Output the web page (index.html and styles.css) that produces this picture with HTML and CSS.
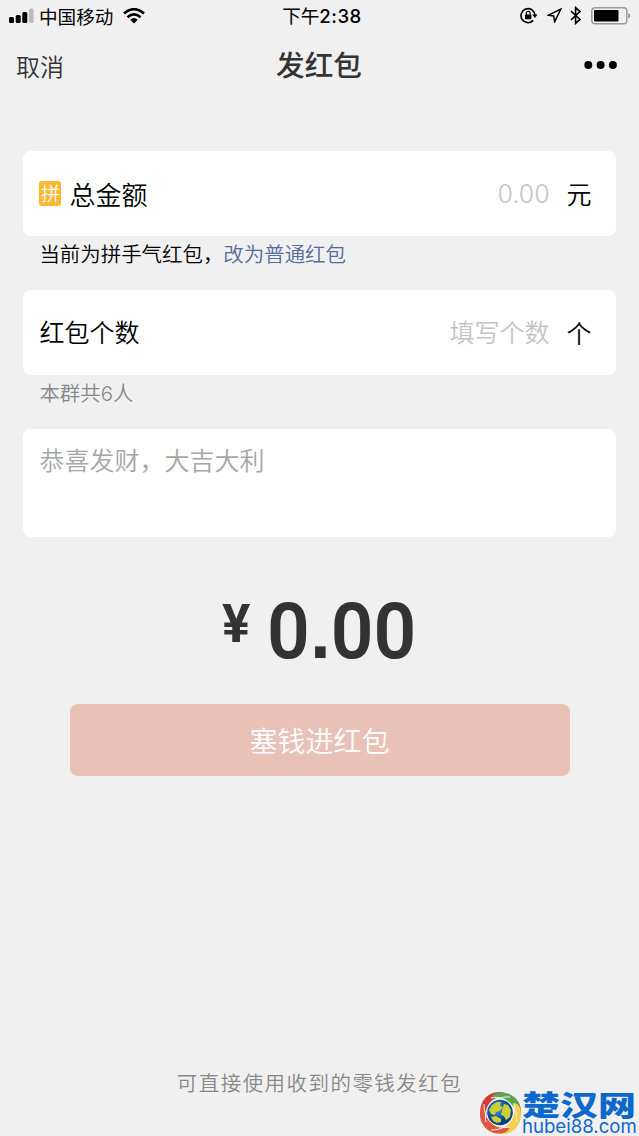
FILE: index.html
```html
<!DOCTYPE html>
<html lang="zh-CN">
<head>
<meta charset="utf-8">
<title>发红包</title>
<link rel="stylesheet" href="styles.css">
</head>
<body>
<div class="screen">
  <header class="status">
    <div class="carrier">
      <svg class="signal" width="25" height="16" viewBox="0 0 25 16"><rect x="0" y="9" width="5" height="6" rx="1.5"/><rect x="6.7" y="7" width="5" height="8" rx="1.5"/><rect x="13.3" y="4" width="5" height="11" rx="1.5"/><rect x="20" y="0.5" width="4.7" height="14.5" rx="1.5" fill="#bcbcbc"/></svg>
      <span>中国移动</span>
      <svg class="wifi" width="22" height="16" viewBox="0 0 22 16"><g fill="none" stroke="#000" stroke-width="2.7"><path d="M1 5.4Q11-3 21 5.4"/><path d="M4.5 9.2Q11 3.6 17.5 9.2"/></g><path d="M7.3 11.7Q11 8.5 14.7 11.7L11 15.5Z"/></svg>
    </div>
    <div class="time">下午<b>2:38</b></div>
    <div class="indicators">
      <svg width="18" height="17" viewBox="0 0 18 17"><path d="M13.2 13.4A7 7 0 1 1 15 8" fill="none" stroke="#000" stroke-width="1.6"/><path d="M12.2 7.5h5.4l-2.7 3.4z"/><rect x="5" y="7.4" width="6.4" height="4.8" rx=".6"/><path d="M6.3 8V6.2a1.9 1.9 0 0 1 3.8 0V8" fill="none" stroke="#000" stroke-width="1.2"/></svg>
      <svg class="arrow" width="15" height="15" viewBox="0 0 15 15"><path d="M13.8 1.1L1.1 7.2l5.6.8.9 5.9z" fill="none" stroke="#000" stroke-width="1.5"/></svg>
      <svg class="bluetooth" width="12" height="19" viewBox="0 0 12 19"><path d="M1 5.2l9 8.2-4.4 4V1.6l4.4 4-9 8.2" fill="none" stroke="#000" stroke-width="1.6"/></svg>
      <svg class="battery" width="40" height="18" viewBox="0 0 40 18"><rect x=".8" y=".8" width="35" height="16" rx="3.3" fill="none" stroke="#999" stroke-width="1.5"/><rect x="3" y="3" width="24.5" height="11.6" rx="1"/><path d="M37.2 6v5.6q2-.7 2-2.8t-2-2.8" fill="#999"/></svg>
    </div>
  </header>
  <nav class="nav">
    <span class="cancel">取消</span>
    <h1>发红包</h1>
    <svg class="more" width="34" height="8" viewBox="0 0 34 8"><circle cx="4.3" cy="4" r="4"/><circle cx="16.6" cy="4" r="4"/><circle cx="28.9" cy="4" r="4"/></svg>
  </nav>
  <main>
    <section class="card row">
      <i class="badge">拼</i><span class="label total">总金额</span>
      <span class="hint number">0.00</span><span class="unit">元</span>
    </section>
    <p class="note mode">当前为拼手气红包，<a>改为普通红包</a></p>
    <section class="card row">
      <span class="label">红包个数</span>
      <span class="hint">填写个数</span><span class="unit">个</span>
    </section>
    <p class="note members">本群共<span class="digit">6</span>人</p>
    <section class="card message">恭喜发财，大吉大利</section>
    <div class="amount"><span class="yen">¥</span><span class="value">0<span class="point">.</span>00</span></div>
    <button class="submit">塞钱进红包</button>
  </main>
  <footer>可直接使用收到的零钱发红包</footer>
  <div class="watermark">
    <svg width="44" height="44" viewBox="0 0 44 44">
      <defs><radialGradient id="globe" cx=".4" cy=".35"><stop stop-color="#2f9bdc"/><stop offset="1" stop-color="#0a4284"/></radialGradient></defs>
      <path d="M3 25C0 12 9 1 21 1C26 1 29 3 32 6C21 4 12 8 9 17Q8 20 9 26L7 31Q4 29 3 25Z" fill="#d23a35"/>
      <path d="M19 2C31-1 43 8 43 20Q43 26 39 31C39 20 34 11 25 8Q20 6 13 7Q15 3 19 2Z" fill="#5aa552"/>
      <path d="M42 17C46 30 37 43 25 43Q18 43 13 39C24 40 32 34 35 26Q37 20 35 12Q40 12 42 17Z" fill="#f4cf4a"/>
      <path d="M25 42C13 45 2 35 2 24Q2 17 6 13C6 24 10 31 18 35Q24 38 32 36Q30 41 25 42Z" fill="#e0573f"/>
      <path d="M8 31C5 17 14 5 32 6M13 7C28 4 39 15 39 31M13 39C30 39 38 28 36 13M6 13C6 29 17 39 32 36" fill="none" stroke="#f6f3ec" stroke-width="1"/>
      <circle cx="22" cy="21.5" r="12.8" fill="url(#globe)"/>
      <path d="M11 19l3-5 5-3 4 0-1 4 3 1-3 4-4 1-1 3-4-1zM26 13l4 1 3 5-1 7-4 3-2-4-3-1 1-5zM13 26l5-1 5 3 0 3-4 1-4-2z" fill="#c9cf35"/>
    </svg>
    <div class="brand"><strong>楚汉网</strong><span>hubei88.com</span></div>
  </div>
</div>
</body>
</html>
```

FILE: styles.css
```css
* { box-sizing: border-box; }
body {
  margin: 0;
  background: #f0f0f0;
  color: #000;
  font-family: "Noto Sans CJK SC", sans-serif;
  font-weight: 350;
}
svg { display: block; flex: none; }
.screen { position: relative; height: 1136px; display: flex; flex-direction: column; overflow: hidden; }
.status {
  height: 31px;
  display: grid;
  grid-template-columns: 1fr auto 1fr;
  align-items: center;
  padding: 0 8px 0 9px;
  font-size: 18.6px;
  font-weight: 400;
  line-height: 30px;
}
.carrier { display: flex; align-items: center; }
.carrier span { margin: 0 10px 0 5px; }
.time { padding-left: 4px; white-space: nowrap; }
.time b { font: 500 18.6px/30px Inter, sans-serif; letter-spacing: .5px; }
.indicators { display: flex; align-items: center; justify-content: flex-end; }
.arrow { margin-left: 9px; }
.bluetooth { margin-left: 8px; }
.battery { margin-left: 9px; }
.nav {
  height: 69px;
  display: grid;
  grid-template-columns: 1fr auto 1fr;
  align-items: center;
  padding: 0 21px 0 16px;
  color: #333;
}
.cancel { font-size: 24px; line-height: 34px; }
.nav h1 { margin: 0; padding: 0 0 3px 4px; font-size: 28.6px; line-height: 40px; font-weight: 500; }
.more { justify-self: end; margin-bottom: 1px; fill: #000; }
main { padding: 51.4px 23.4px 0; display: flex; flex-direction: column; }
.card { background: #fff; border-radius: 8px; }
.row { height: 85px; display: flex; align-items: center; padding: 0 24px 0 16px; }
.badge {
  width: 22px; height: 25px;
  margin-right: 8px;
  border-radius: 3px;
  background: #fbb72f;
  color: #fff;
  font: 350 19px/24px "Noto Sans CJK SC", sans-serif;
  text-align: center;
}
.label { padding-bottom: 3px; font-size: 25px; }
.total { padding-bottom: 1px; font-size: 26px; }
.hint { margin-left: auto; padding-bottom: 4px; font-size: 25px; font-weight: 350; color: #c4c4c6; }
.number { padding-bottom: 0; font-family: Inter, sans-serif; }
.unit { margin-left: 17px; padding-bottom: 2px; font-size: 25px; font-weight: 350; }
.note { margin: 0; padding-left: 16px; height: 54px; font-size: 20.45px; line-height: 34px; }
.note a { color: #566b9c; }
.members { color: #888; }
.digit { font-family: Inter, sans-serif; }
.message { height: 108px; padding: 12px 16px; font-size: 25px; line-height: 37px; color: #a6a6a6; }
.amount {
  height: 167px;
  display: flex;
  justify-content: center;
  color: #333;
  font-family: Roboto, sans-serif;
  font-weight: 700;
}
.yen { padding: 55px 0 0 2px; font-size: 53px; line-height: 64px; }
.value { margin-left: 13px; padding-top: 49px; font-size: 78px; line-height: 90px; font-weight: 600; transform: scaleX(.96); }
.point { font-family: "Liberation Sans", sans-serif; }
.submit {
  align-self: center;
  width: 500px; height: 72px;
  border: 0;
  border-radius: 8px;
  background: #e8c1b7;
  color: #fff;
  font: 350 28px/70px "Noto Sans CJK SC", sans-serif;
  padding: 0;
}
footer { margin-top: auto; padding-bottom: 39px; text-align: center; font-size: 20.5px; line-height: 30px; letter-spacing: 1.45px; color: #888; }
.watermark { position: absolute; right: 0; bottom: 1px; display: flex; align-items: center; gap: 0; color: #0d68cd; }
.brand { width: 117px; height: 44px; display: flex; flex-direction: column; }
.brand strong { height: 25px; font-size: 38px; font-weight: 900; line-height: 25px; white-space: nowrap; transform: scaleY(.74); }
.brand span { padding-top: 1px; font: 400 18.6px/18px Inter, sans-serif; white-space: nowrap; }
```
